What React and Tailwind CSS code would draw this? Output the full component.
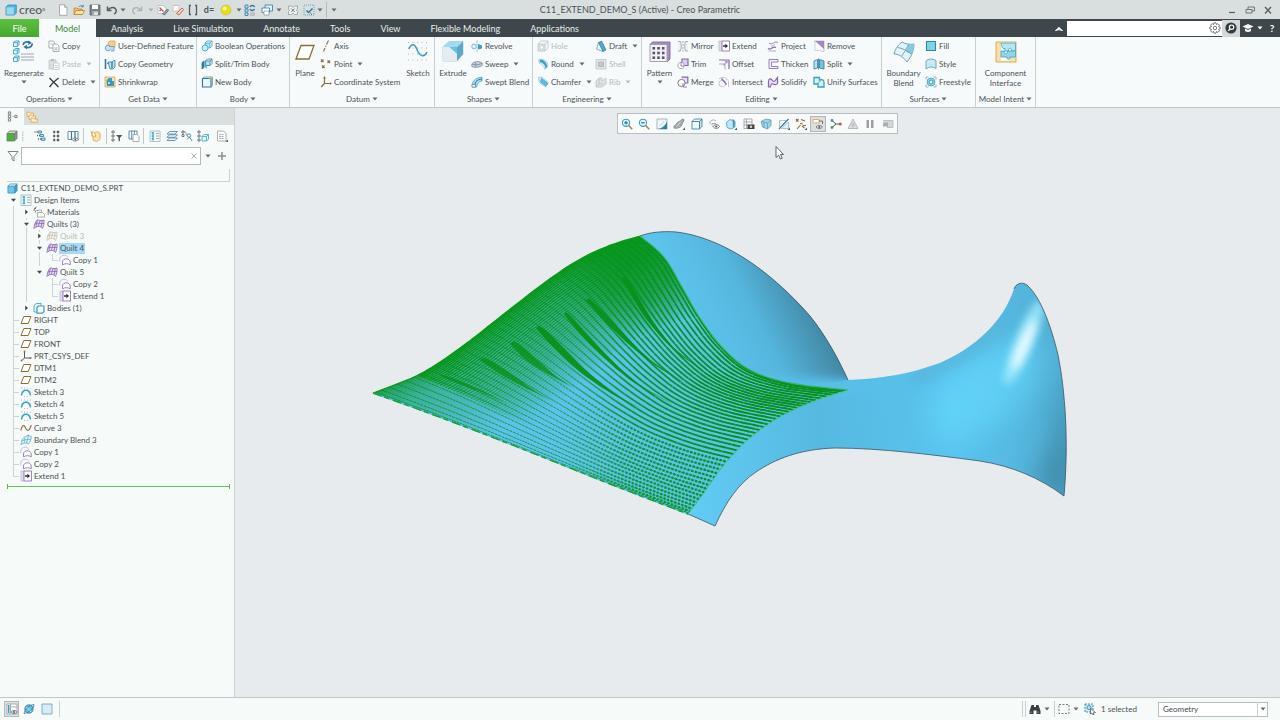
import React from "react";

/* ---------- palette ---------- */
const N = "#35779c";
const T = "#3a9fc4";
const L = "#b4e4f4";
const P = "#8466ad";
const G = "#969ca0";
const D = "#565c60";
const O = "#8a6f38";
const Y = "#dba548";

const cube = (x, y, s, c = T, f = L) => (
  <>
    <path d={`M${x} ${y + s * 0.3}h${s * 0.7}v${s * 0.7}h${-s * 0.7}z`} fill={f} stroke={c} />
    <path d={`M${x} ${y + s * 0.3}l${s * 0.3} ${-s * 0.3}h${s * 0.7}v${s * 0.7}l${-s * 0.3} ${s * 0.3}`} fill="none" stroke={c} />
    <path d={`M${x + s * 0.7} ${y + s * 0.3}l${s * 0.3} ${-s * 0.3}`} stroke={c} />
  </>
);

const solidBox = (front, top, side, line) => (
  <>
    <path d="M1 3.500h7.500V11H1z" fill={front} stroke={line} />
    <path d="M1 3.500L3.500 1H11L8.500 3.500z" fill={top} stroke={line} />
    <path d="M8.500 3.500L11 1V8.500L8.500 11z" fill={side} stroke={line} />
  </>
);

const quiltShape = (c, f) => (
  <>
    <path d="M1 10.500C1.200 7 2 4 4.500 1.800C7 3 9 2.500 11 2C11.500 5 10.500 8 9.500 10.500C8.500 9 7 8.500 5.500 8.500C3.500 8.600 2 9.200 1 10.500z" fill={f} stroke={c} />
    <path d="M2 6C4.500 4.500 8 5.800 11 5.500M7.300 2.500C6.300 4.500 5.600 6.500 5.500 8.500M4.400 2C3.500 4.800 3.200 7 3.200 8.800M9.300 2.500L8 9" stroke={c} fill="none" />
  </>
);
const copyShape = (
  <>
    <path d="M.8 7.500V4.500C1 2.500 3 1.200 5 1.200S8.500 2 8.700 3.500" fill="none" stroke="#b9b2c6" />
    <path d="M3.500 10.800V8C3.600 6 5.300 4.800 7.300 4.800S11 6 11.200 8V10.800C9 9.300 6 9.300 3.500 10.800z" fill="#fff" stroke={P} />
  </>
);
const extendShape = (
  <>
    <path d="M1 1h3v10H1z" fill="#e3dfee" stroke="#c0b8d0" />
    <path d="M4 1h7.500v10H4z" fill="#fff" stroke={P} />
    <path d="M5 6h2.500" stroke="#222" strokeWidth="1.400" />
    <path d="M7.300 3.800L10 6L7.300 8.200z" fill="#222" />
  </>
);

const ICONS = {
  logo: (<><path d="M1 3L3 1H11.300V9L9.300 11H1z" fill="#4cb4df" stroke="#2b93c4" /><path d="M1.500 3.300h7.300v7.200H1.500z" fill="#9cd9f0" /></>),
  file: (<><path d="M2.500.8h5l2.500 2.500v8H2.500z" fill="#fff" stroke={G} /><path d="M7.500.8v2.500H10" fill="none" stroke={G} /></>),
  open: (<><path d="M1 10.500V4h3l1 1h4v5.500z" fill="#f3c069" stroke="#b98427" /><path d="M1 10.500L3 6.500h8.500L9.500 10.500z" fill="#fbe0ab" stroke="#b98427" /><path d="M6 3C6.500 1.500 8.500 1 10 2.500M10.300.8v2H8.300" fill="none" stroke={N} /></>),
  save: (<><path d="M1 1h10v10H1z" fill="#7b8488" stroke="#5f676b" /><path d="M3 1h6v4H3z" fill="#fff" /><path d="M3 7.500h6V11H3z" fill="#d9dddf" /><path d="M4 8v3" stroke={D} /></>),
  undo: (<path d="M1.500 2.500v4h4M1.800 6.300C4 3 8.500 2.600 10 5.500C10.800 7.500 9.800 9.300 8 10" fill="none" stroke={D} strokeWidth="1.500" />),
  redo: (<path d="M10.500 2.500v4h-4M10.200 6.300C8 3 3.500 2.600 2 5.500C1.200 7.500 2.200 9.300 4 10" fill="none" stroke="#aab0b3" strokeWidth="1.300" />),
  docpen: (<><path d="M1 1.500h5l3 2.500V9.500H1z" fill="#fff" stroke="#b5b9bc" /><path d="M2.500 3.500l4 4M2.500 7l2-2" stroke="#c25b50" strokeWidth="1.300" /><path d="M5.500 10L10.500 5l1.200 1.200L7.500 11z" fill="#8aa3b5" stroke={D} strokeWidth=".7" /></>),
  docred: (<><path d="M1 1.500h6v5.500H1z" fill="#fff" stroke="#cfb4b0" /><path d="M4.500 9.500L10 4l1.500 1.500L7 11z" fill="#f2d7b0" stroke="#c25b50" strokeWidth=".9" /></>),
  bracket: (<path d="M4 1.500H2.500v9H4M8 1.500h1.500v9H8" fill="none" stroke={D} strokeWidth="1.300" />),
  ball: (<><circle cx="6" cy="6" r="5" fill="#e8de1f" stroke="#c9c23a" strokeWidth=".7" /><circle cx="4.700" cy="4.500" r="2" fill="#fbf68a" /></>),
  regen: (<><path d="M1 1h3v3H1zM1 5h3v3H1zM1 9h3v2.500H1z" fill={L} stroke={N} /><path d="M6 3C7 1 10 1 10.500 3M10.500 5C9.500 7 7 7 6 5" fill="none" stroke={N} strokeWidth="1.400" /><path d="M6 9h5M6 11h5" stroke={G} /></>),
  windows: (<><path d="M4 1h7.500v6H4z" fill="#dff1f8" stroke={N} /><path d="M1 4h7.500v4.500H1z" fill="#fff" stroke={N} /><path d="M3 7h5v4H3z" fill="#fff" stroke={G} /></>),
  closewin: (<><path d="M1.500 2h3l1.500 1.500L7.500 2h3v3L9.500 6.200l1 1.300v3h-3L6 9l-1.500 1.500h-3v-3l1-1.300-1-1.200z" fill="#eef0f1" stroke={G} /><path d="M4.200 4.500l3.500 3.500m0-3.500L4.200 8" stroke={D} /></>),
  select: (<><path d="M1 1h10v10H1z" fill="none" stroke={T} strokeDasharray="1 1" /><path d="M3.500 6.500l2 2L9.500 4.500" stroke={N} strokeWidth="1.500" fill="none" /><path d="M7 8.500l2 2.500" stroke={D} /></>),
  copy: (<><path d="M1 1h4l1.500 1.500V8H1z" fill="#fff" stroke={G} /><path d="M5 4h4l2 2v5.500H5z" fill="#fff" stroke={G} /><path d="M6.500 8h3M6.500 9.700h3M2.500 4h2" stroke={G} strokeWidth=".8" /></>),
  paste: (<><path d="M1 2h7v9H1z" fill="#dcdfe0" stroke="#c0c5c7" /><path d="M3 1h3v2H3z" fill="#b5babd" /><path d="M5.500 5H11v6.500H5.500z" fill="#fff" stroke="#c0c5c7" /><path d="M7 7.500h3M7 9.500h3" stroke="#c0c5c7" /></>),
  del: (<path d="M1.500 2L10.500 11M10.500 2C7 4.500 4 7.500 1.500 11" fill="none" stroke="#3d4347" strokeWidth="1.500" />),
  udf: (<><path d="M4 2.500L6 1h5v6L9 9H4z" fill="#f5cf8a" stroke={Y} /><circle cx="4" cy="8" r="2.800" fill="#cfe2f2" stroke="#6a93bd" /><path d="M5 6.500h5V11H7" fill="#b9dcf0" stroke="#6a93bd" /></>),
  copygeo: (<><path d="M1.500 1v10" stroke={N} strokeWidth="1.600" /><path d="M3 5.500h2.500" stroke={N} /><path d="M4 4h4l1.500-1.500H11V9l-2 2H6z" fill={L} stroke={N} /><path d="M8 4v6" stroke={N} strokeWidth="1.300" /></>),
  shrink: (<><path d="M1 1h10v10H1z" fill="#f6dfb0" stroke={Y} /><path d="M2.500 4L5 2h3v3h2v5H3z" fill={T} /><path d="M3.500 5.500h3v3h-3z" fill={L} stroke={N} /></>),
  bool: (<>{cube(4, 1, 7, T)}<circle cx="4" cy="8" r="3" fill="#cbeaf6" stroke={T} /></>),
  splitbody: (<><path d="M1 4.500L3 3v6.500L1 11z" fill={N} stroke={N} />{cube(4.500, 1, 6.500, N)}<path d="M3.500 2.500L6 8v3L3.500 9z" fill={T} opacity=".7" /></>),
  newbody: (<><path d="M1.500 2.500h8.500V11H1.500z" fill="#eef9fd" stroke={N} strokeWidth="1.200" /><path d="M1.500 2.500L3 1h8.500v8L10 11" fill="none" stroke={T} /><path d="M9.500.5l.6 1.700 1.700.5-1.700.7-.6 1.700-.6-1.700-1.700-.7 1.700-.5z" fill={Y} /></>),
  axis: (<path d="M8.500.5L6.500 4.500M6 5.800L5.600 6.700M5 8L3.500 11.500" stroke={O} strokeWidth="1.100" />),
  point: (<path d="M1 1.500l2.500 2.500m0-2.500L1 4M7.500 2.500L10 5m0-2.500L7.500 5M2 7.500L4.500 10m0-2.500L2 10" stroke={O} fill="none" strokeWidth="1.100" />),
  csys: (<><path d="M4.500 1v6.500H11M4.500 7.500L1.200 11" fill="none" stroke={O} strokeWidth="1.200" /><path d="M3.300 2.500L4.500.5L5.700 2.500M10 6.300l1.500 1.200L10 8.700" fill="none" stroke={O} strokeWidth=".6" /></>),
  revolve: (<><path d="M6 .5v11" stroke={G} strokeDasharray="2 1" /><ellipse cx="3" cy="6.500" rx="2.300" ry="2.500" fill="#e2f3fa" stroke="#6fa9c6" /><path d="M7 4L11 5.500v3L7 9.500z" fill={T} /></>),
  sweep: (<><path d="M.8 6C2 3.500 9 2.500 11.300 5v2.500C9 9.500 3 10 .8 8.500z" fill="#c6ced4" stroke="#8597a6" /><path d="M1 6C3.500 7.300 9 7 11 5M4 4.200C5 5.500 5 7 4.300 9" stroke="#6c8da6" fill="none" /></>),
  sweptblend: (<><path d="M1 9C2 4 6 1.500 11 1.200V5C8 5 6 8 5.500 11H1.500z" fill={L} stroke={T} /><path d="M3.500 10C4 6 7 3 11 3" stroke={N} fill="none" strokeWidth="1.200" /><path d="M1 8.500h3.500V11.200H1z" fill="#e9f6fb" stroke="#6c8da6" /></>),
  hole: (<>{cube(1, 1, 10, "#bcc1c3", "#e2e5e6")}<ellipse cx="4.700" cy="7.500" rx="1.600" ry="2.300" fill="#fff" stroke="#bcc1c3" /></>),
  round: (<><path d="M1.500 1.500L5 1C9 2 11 5 11 8.500L7.500 11.300C7.500 8.500 6 6.500 2.500 5.500z" fill="#d9eff7" stroke="#a9c6d2" /><path d="M3.300 1.500C7.500 2 10 5 10.200 9L8.500 10.500C8.300 7 6.300 4.800 2.500 4z" fill={T} /></>),
  chamfer: (<><path d="M1.500 1.500L5 1L11.300 6.500L8.500 11L2 6z" fill="#dcecf2" stroke="#a9c0ca" /><path d="M4.500 2.500L10.800 7.500L8.800 10L3.500 5.800z" fill="#5fc0e0" stroke={T} /></>),
  draft: (<><path d="M1.500 9L3.500 2.500 8 4v7.500z" fill="#e6f5fa" stroke="#6c9db3" /><path d="M3.500 2.500L6.500 1l4.500 9-3 1.500z" fill="#52aac9" stroke={N} strokeWidth=".7" /></>),
  shell: (<><path d="M1 1.500h10v9.500H1z" fill="#e4e7e8" stroke="#bcc1c3" /><path d="M3.500 4h5v4.500h-5z" fill="#c3c8ca" stroke="#aab0b3" /></>),
  rib: (<><path d="M1 5L4 2h3v3l4-3v6l-4 3H1z" fill="#dfe2e3" stroke="#bcc1c3" /><path d="M4 2v6l-3 3M4 8h4" stroke="#bcc1c3" fill="none" /></>),
  mirror: (<><path d="M1 1.500H3.500C4.500 4 4.500 8.500 3.500 11H1M11 1.500H8.500C7.500 4 7.500 8.500 8.500 11H11" fill="#f1eff6" stroke={G} /><path d="M6 1v10.500" stroke={P} strokeWidth=".6" strokeDasharray="2 1" /></>),
  extend: extendShape,
  project: (<><path d="M2 3C5 6 7 .5 11 2.500" stroke={P} fill="none" /><path d="M1 8.500C4 11 6 5.500 9 7.500" stroke={P} strokeWidth="1.200" fill="none" /><path d="M4 6.500l4-2M1.500 11H9" stroke={G} /></>),
  remove: (<><path d="M1 1h10v10.500H8.500" fill="none" stroke="#b9b2c6" /><path d="M2 1h9v8z" fill={P} opacity=".75" /><path d="M2 1v9.500h6.500" stroke="#cfc8da" fill="none" /></>),
  trim: (<><path d="M5 1h6v6.500H5z" fill="#d9cfe9" stroke={P} strokeWidth="1.200" /><circle cx="4" cy="7.500" r="3.200" fill="#fff" stroke={G} /><path d="M4 4.300V8h3.200" stroke={P} fill="none" /></>),
  offset: (<><path d="M1 2h10v9" fill="none" stroke={P} strokeWidth="1.200" /><path d="M1 6h6v5.500" fill="none" stroke={G} /><path d="M5.500 7.500L9 3.500M6.800 3.300H9v2" stroke={P} fill="none" /></>),
  thicken: (<path d="M11 1.500H2v9h9V8.500H4.500v-4.500H11z" fill="#f4f1f8" stroke={P} />),
  merge: (<><path d="M4.500 1.200h6.300V7H8" fill="#e9e4f1" stroke={P} strokeWidth="1.200" /><circle cx="4.500" cy="7" r="3.600" fill="#fff" stroke={D} /><path d="M6 7v4h4" fill="none" stroke={P} /></>),
  intersect: (<><path d="M1 3C4 0 9 1.500 10.500 5.500V11" fill="none" stroke="#b5babd" /><circle cx="4.300" cy="7.500" r="3.300" fill="#fff" stroke="#b5babd" /><path d="M3.500 2.500L8.500 8.500" stroke={P} strokeWidth="1.200" /></>),
  solidify: (<path d="M1.500 11V5C2 2.500 3.500 2.200 5 4C6.500 6 7.500 6 9 3.500L10.500 1.500V7.500C9 9.500 7 8.500 6 8C4.500 7.500 4 8 3.500 11z" fill="#e7e0f0" stroke={P} strokeWidth="1.200" />),
  split: (<><path d="M1 3l3.500-1.500V10L1 11z" fill={L} stroke={N} /><path d="M6.500 1.500L11 3v8l-4.500-1z" fill="#74c3de" stroke={N} /><path d="M5.500.5v11" stroke={N} /></>),
  unify: (<><path d="M1 1.500h5.500V4C9 3 11 4 11 6.500V11H5V8H1z" fill="#d7f1fa" stroke={T} strokeWidth="1.300" /><path d="M5 8C5 6 6 5 8 5" stroke={T} fill="none" /></>),
  fill: (<path d="M1.500 1.500h9v9h-9z" fill="#7fd3e4" stroke="#2f8ba3" strokeWidth="1.100" />),
  style: (<path d="M1 11V3C3 .5 8 .5 11 2.500V10.500C8 8.500 4 8.500 1 11z" fill="#c6ecf7" stroke="#6c8da6" />),
  freestyle: (<><path d="M1 3.500V1h2.500M8.500 1H11v2.500M11 8.500V11H8.500M3.500 11H1V8.500" fill="none" stroke={G} /><circle cx="6" cy="6" r="4" fill="#8fdcf2" stroke={T} /><circle cx="6" cy="6" r="2" fill="#dff5fb" stroke={N} /></>),
  treetab: (<><path d="M1.500 1h2.500v2.500H1.500zM1.500 4.700H4v2.500H1.500zM1.500 8.500H4V11H1.500z" fill="#fff" stroke={D} /><path d="M6 6h1M8.500 4.700H11v2.500H8.500z" fill="#fff" stroke={D} /></>),
  folders: (<><path d="M1 1.200h2.300l.8 1H7.500V5.500H1z" fill="#fdf0d5" stroke={Y} /><path d="M3 4h2.300l.8 1H9.500V8.300H3z" fill="#fdf0d5" stroke={Y} /><path d="M5 7h2.300l.8 1h3.200v3.200H5z" fill="#fdf0d5" stroke={Y} /></>),
  green: solidBox("#4fae3c", "#cfd6cf", "#8d968d", "#6a7a6a"),
  steps: (<><path d="M.5 2h3M3 5.500h3M4 9h3" stroke={D} strokeWidth="1.300" strokeDasharray="1 1" /><path d="M4 1h3.500v2H4zM6 4.500h3.500v2H6zM7.500 8h3.500v2.300H7.500z" fill={L} stroke={N} /></>),
  dotsTree: (<path d="M3.500 1h1.500v2H3.500zM3.500 5h1.500v2H3.500zM3.500 9h1.500v2H3.500zM7 1h2v2H7zM7 5h2v2H7zM7 9h2v2H7z" fill={D} stroke={D} strokeWidth=".5" />),
  cols: (<><path d="M1 1.500h10v8H1z" fill="#fff" stroke={N} /><path d="M4.500 1.500v8M8 1.500v8" stroke={N} strokeWidth="1.200" /><path d="M5 9.500C6.500 7.500 9.500 7.500 11.500 9.500C9.500 11.500 6.500 11.500 5 9.500z" fill="#fff" stroke={D} /><circle cx="8.300" cy="9.500" r=".9" fill={D} /></>),
  brace: (<><path d="M1.500 2h3M3 2v4h1.500" stroke={Y} fill="none" strokeWidth="1.200" /><path d="M5 3l3.500-1.500L11 3v6.500L7.500 11.500 4 10.300V6.500L6.500 7V4z" fill="#fbe2b0" stroke={Y} /></>),
  treefilter: (<><path d="M1 1h2v2H1zM1 5h2v2H1zM1 9h2v2H1z" fill="#fff" stroke={D} /><path d="M5 5h6.500L9 7.700v3.800L7.500 10.500V7.700z" fill={D} /></>),
  colscopy: (<><path d="M1 1h8v8H1z" fill="#fff" stroke={N} /><path d="M3.700 1v8M6.300 1v8" stroke={N} /><path d="M5 4.500h4l2 2v5H5z" fill="#fff" stroke={G} /></>),
  design: (<><path d="M1 1h10v10.500H1z" fill="#f4fafc" stroke="#9fb4c0" /><path d="M2.500 3h2.500M2.500 6h2.500M2.500 9h2.500M4 2v8.500" stroke={T} strokeWidth="1.200" /><path d="M7 3.500h3M7 6h3M7 8.500h3" stroke={G} /></>),
  layers: (<><path d="M1 10.500L3.500 8H11.500L9 10.500zM1 7.300L3.500 4.800H11.500L9 7.300zM1 4L3.500 1.500H11.500L9 4z" fill="#f4fafc" stroke="#3f7fa3" /></>),
  link: (<><path d="M1 1h2v2H1zM1 4.500h2v2H1z" fill="#fff" stroke={D} /><path d="M3 2h2v3h2" stroke={G} /><circle cx="8" cy="5.500" r="1.700" fill="#fff" stroke={N} /><path d="M8.500 7l2.500 4M6 9.500l2-2" stroke={N} /></>),
  treecube: (<><path d="M1 1h2v2H1zM1 5h2v2H1zM1 9h2v2H1z" fill="#fff" stroke={D} />{cube(5, 4.500, 6.500, T, "#e4f5fb")}</>),
  notes: (<><path d="M1.500 1h6l2.500 2.500v7.500H1.500z" fill="#fff" stroke={G} /><path d="M3 4.500h5M3 6.500h5M3 8.500h5" stroke={G} strokeDasharray="2 .5" /><path d="M9.500 12h2.500V9.500z" fill={D} /></>),
  funnel: (<path d="M1 1.500h10L7 6.500V11L5 9.500V6.500z" fill="#fff" stroke="#5d6468" />),
  part: solidBox("#6cc6ea", "#c5eaf7", "#3f9fc6", "#3a93ba"),
  material: (<><path d="M1 5C1 2.500 2.500 1 4.500 1M2.500 6.500V4.500h3M1 2.500h2" stroke={D} fill="none" strokeDasharray="2 1" /><path d="M4.500 6.500h5L11.500 8.500v2.500h-7z" fill="#fff" stroke={G} /><path d="M5.500 4h3v2.500" stroke={G} fill="none" /></>),
  quilt: quiltShape(P, "#e6daf2"),
  quiltoff: quiltShape("#c5c0b4", "#f6f4ee"),
  copies: copyShape,
  bodies: (<><path d="M1 4l2-2.500h5V8L6 10H1z" fill="#dff3fa" stroke={T} /><path d="M4 5.500L5.500 4H11V9.500L9.500 11.200H4z" fill="#fff" stroke={T} strokeWidth="1.200" /></>),
  planes: (<path d="M1 9.500L3.800 2.500H11L8.200 9.500z" fill="#fff" stroke={O} strokeWidth="1" />),
  csysd: (<><path d="M4.500 1.500v6.500H11M4.500 8L1.200 11" fill="none" stroke={D} strokeWidth="1" /><path d="M4.500 .5v2M9.500 8h2M1 11l1-1" stroke={O} strokeWidth="1.500" /></>),
  sketch: (<><path d="M1.500 9.500C2.500 2.500 9.500 2.500 10.500 9.500" fill="none" stroke={T} strokeWidth="1.500" /><path d="M1 2h10M1 6h1M10 6h1M4 10.500h4" stroke="#8cb9cc" strokeDasharray="1 2" /></>),
  curve: (<path d="M.8 8.500C2 3.500 3.800 2 5.300 5.500C7 9.800 9.500 9.500 11.200 3" fill="none" stroke={O} strokeWidth="1.100" />),
  bblend: (<><path d="M1 11C1.500 7.500 2 5 4 3.500L8.500 1C9.500 2 10.500 2.500 11.300 2.500C11 6 10 8 8.500 10C7 8.500 3 8.500 1 11z" fill="#e4f6fb" stroke="#56acca" /><path d="M4 3.500C5 4.500 5 7 4 8.800M8.500 1C8 4 7.500 6 6.500 9M2 7C5 5 8 6 10.800 5" stroke="#56acca" fill="none" /></>),
  zoomin: (<><circle cx="5" cy="4.800" r="3.600" fill="#e9f8fd" stroke={T} strokeWidth="1.100" /><path d="M5 3v3.600M3.200 4.800h3.600" stroke={N} strokeWidth="1.300" /><path d="M7.700 7.500l3.500 3.800" stroke="#a08457" strokeWidth="1.500" /></>),
  zoomout: (<><circle cx="5" cy="4.800" r="3.600" fill="#e9f8fd" stroke={T} strokeWidth="1.100" /><path d="M3.200 4.800h3.600" stroke={N} strokeWidth="1.300" /><path d="M7.700 7.500l3.500 3.800" stroke="#a08457" strokeWidth="1.500" /></>),
  refit: (<><path d="M1 1h10v10H1z" fill="#f1f8fb" stroke="#92a7b2" /><path d="M11 3.500V11H2.500C6 10 9.500 7.500 11 3.500z" fill="#2f7f9f" /><path d="M3.500 7.500L8 3.500" stroke="#9cc8d8" /></>),
  render: (<><path d="M1 8C3 8 3.500 4 6 3.500S8 1 10.500 1L11 3C9 4 9.500 8.500 6.500 9.500S2 10.500 1 10z" fill="#a4aaae" stroke="#7f878b" /><path d="M3.500 9C5.500 8 5 5 7.500 4.500" stroke="#e4e7e8" /><path d="M9.500 12h2.500V9.500z" fill={D} /></>),
  boxwire: solidBox("#f0fafd", "#f0fafd", "#bfe4f1", N),
  saved: (<><path d="M2 6V4C3 1.500 7 1.500 8 3M4 7.500V5.500h4" fill="none" stroke={G} /><path d="M5 8.500C6.500 6 10 6 11.500 8.500C10 11 6.500 11 5 8.500z" fill="#fff" stroke={D} /><circle cx="8.200" cy="8.500" r="1.100" fill={D} /></>),
  section: (<><path d="M1.500 4.500L5 1.500L10 3.500V9L6 11L2 9.500z" fill="#bfe9f6" stroke={T} /><path d="M7.500 1C10.500 2 10.500 8 8 10z" fill="#4a93b3" /><path d="M9.500 12h2.500V9.500z" fill={D} /></>),
  camlist: (<><path d="M1 1h8v9.500H1z" fill="#fff" stroke={G} /><path d="M1 4h8M1 7h4M3.500 1v9" stroke={G} /><path d="M4.500 6.500h7V11h-7z" fill="#3f464a" /><circle cx="8" cy="8.700" r="1.300" fill="#cfd4d6" /></>),
  persp: (<><path d="M1 3.500L6 1L11 2v5.500L7.500 11L2.500 9z" fill="#a3d3e6" stroke="#5fa0ba" /><path d="M1 3.500l6.500 1.500V11M7.500 5L11 2M4 4.300V9.500" stroke="#5fa0ba" fill="none" /></>),
  datumdisp: (<><path d="M1.500 9V2.500h7" stroke="#9eb8c4" fill="none" /><path d="M3.500 10.500h7V4z" fill="#dff3fa" stroke="#9eb8c4" /><path d="M1 11L10.500 1" stroke={N} strokeWidth="1.100" /><path d="M9.500 12h2.500V9.500z" fill={D} /></>),
  datums: (<><path d="M1 1l2.500 2.500M3.500 1L1 3.500M6 1.500l4 1.500M2 11L5.500 7M5 5.500l3 .5M7 8l2.500 2M8 7.500h3" stroke={O} strokeWidth="1.100" /><path d="M9.500 12h2.500V9.500z" fill={D} /></>),
  annot: (<><path d="M1 1.500h6v3.500H1z" fill="#fff" stroke={Y} /><path d="M7 3h3.500v3" stroke={D} fill="none" /><path d="M4 9C5.500 7 9 7 10.500 9C9 11 5.500 11 4 9z" fill="#fff" stroke={D} /><circle cx="7.300" cy="9" r="1.100" fill={D} /></>),
  spin: (<><path d="M6 6L2 2.500M6 6L2 9.500M6 6h4" stroke={D} strokeWidth="1" /><circle cx="2" cy="2.500" r="1.400" fill="#4a8fb0" /><circle cx="2" cy="9.500" r="1.400" fill="#4a9b6c" /><circle cx="10.300" cy="6" r="1.500" fill="#c5574f" /></>),
  sim: (<path d="M6 1L11 10.500H1zM6 4v6M3.500 8L6 6l2.500 2.500" fill="#dfe2e3" stroke="#a7adb0" />),
  pause: (<path d="M2.500 2h2.500v8H2.500zM7 2h2.500v8H7z" fill="#9aa0a3" />),
  stop: (<><path d="M1 2.500h10v7H5" fill="#d3d7d8" stroke="#b0b6b8" /><path d="M1 4.500h5v4H1z" fill="#a9afb2" /></>),
  modeltree: (<><path d="M1 1h10v10H1z" fill="#fff" stroke={G} /><path d="M2 2h1.500v8H2z" fill={T} /><path d="M4.500 4H11M4.500 1v10" stroke={G} /><path d="M5 9C6.500 7 9.500 7 11.200 9C9.500 11 6.500 11 5 9z" fill="#fff" stroke={D} /><circle cx="8" cy="9" r="1" fill={D} /></>),
  web: (<><circle cx="6" cy="6" r="4.200" fill="#66bfe2" stroke={N} /><path d="M1 10.500C2 6 6 2 11 1.500C11 5 6 10 1 10.500z" fill="none" stroke={N} /><path d="M3 4.500C5 5 7 7 8 9" stroke="#d6f0fa" /></>),
  blank: (<path d="M1 1h10v10H1z" fill="#d7ecf6" stroke="#6f9db5" />),
  binoc: (<><path d="M2.500 2h2.500v2h2V2h2.500L11.500 8v3H7.500V7.500h-3V11H.5V8z" fill="#3b4044" /><path d="M2 8.500v1.500M9 8.500v1.500" stroke="#a4b0b6" /></>),
  dashed: (<path d="M1 1.500h10v9H1z" fill="none" stroke={D} strokeDasharray="2 1.500" />),
  picker: (<><path d="M1 1h8v8H1z" fill="#cdeaf5" stroke={N} strokeDasharray="2 1" /><circle cx="5" cy="4.500" r="2" fill={L} stroke={N} /><path d="M6.500 5.500L11.500 9.500L9.300 9.800L10 11.700L8.600 11.500L8 10L6.500 11z" fill="#fff" stroke={D} /></>),
  gear: (<><path d="M5 .8h2l.4 1.800 1.500-.9 1.500 1.500-.9 1.500L11.200 5v2l-1.700.4.9 1.500-1.500 1.500-1.500-.9L7 11.200H5l-.4-1.700-1.500.9-1.500-1.500.9-1.500L.8 7V5l1.700-.4-.9-1.500 1.500-1.500 1.500.9z" fill="#fff" stroke={D} /><circle cx="6" cy="6" r="1.700" fill="#fff" stroke={D} /></>),
  search: (<><circle cx="6" cy="6" r="5.600" fill="#353c40" /><circle cx="6.600" cy="5.200" r="2.200" fill="none" stroke="#fff" strokeWidth="1.200" /><path d="M5 7L3.300 8.800" stroke="#fff" strokeWidth="1.400" /></>),
  cap: (<><path d="M.5 4.500L6 2l5.500 2.500L6 7z" fill="#fff" /><path d="M3 6.500V9c2 1.200 4 1.200 6 0V6.500L6 8z" fill="#fff" /></>),
  min: (<path d="M3 8.500h6" stroke={D} strokeWidth="1.200" />),
  restore: (<><path d="M4 3h6.500v4H4z" fill="none" stroke={D} /><path d="M2 5.500h6v3.500H2z" fill="#d9dedf" stroke={D} /></>),
  close: (<path d="M3 3l6 6.500M9 3L3 9.500" stroke={D} strokeWidth="1.300" />),
};

const BIG = {
  regen: (
    <>
      {[0, 1, 2].map((i) => <g key={i}>{cube(1.5, 1 + i * 7.5, 5.500, T, "#e4f6fc")}</g>)}
      <path d="M11 5C11.500 2 15 1 17.500 2.500M20 3.500C20.500 6.500 17 8.500 14 7" fill="none" stroke={N} strokeWidth="1.800" />
      <path d="M16.500.2L19.800 3L16 5zM14.800 4.800L11.500 7L15 9.500z" fill={N} />
      <path d="M9 14h13M9 17h13M9 20h13" stroke={G} />
    </>
  ),
  plane: <path d="M3 19L8 5.500H21L16 19z" fill="#fff" stroke={O} strokeWidth="1.300" />,
  sketch: (
    <>
      <path d="M2 2.500h20M2 8h20M2 14h20M2 20h20" stroke="#a5b1b7" strokeDasharray="1 3.500" />
      <path d="M3 9C5 3.500 8.500 3 11 9.500S18 18.500 21 12" fill="none" stroke={T} strokeWidth="1.500" />
    </>
  ),
  extrude: (
    <>
      <path d="M2 7L8 1.500H22V14L16 21H2z" fill="#e9f2f5" stroke="#b9c8cf" />
      <path d="M2 7L8 1.500H22L16 7z" fill="#9fdcf1" />
      <path d="M16 7L22 1.500V14L16 21z" fill="#5ba9c7" />
      <path d="M8 7H16V14L8 7z" fill="#6fbfdd" />
      <path d="M2 7h6L16 14v7H2z" fill="#e3edf0" />
    </>
  ),
  pattern: (
    <>
      <path d="M2 4.500L4.500 2H22V19L19.500 21.500z" fill="#a58bc8" stroke={P} />
      <path d="M2 4.500H19V21.500H2z" fill="#f3f3f6" stroke={G} />
      {[0, 1, 2].map((r) => [0, 1, 2].map((c) => <rect key={`${r}${c}`} x={4.5 + c * 4.7} y={7 + r * 4.7} width="2.600" height="2.600" fill="#5a556c" />))}
    </>
  ),
  blend: (
    <>
      <path d="M2 14C3 9 6 5 10 2C14 4.500 18 4.500 22 4C22 11 19 17 15 22C13 19 7 13.500 2 14z" fill="#e0f4fa" stroke="#6a9aae" />
      <path d="M14 12C15 9 16 6.500 16.500 4.300C18.500 4.500 20 4.300 22 4C22 8 21 11 19.500 14z" fill="#86cbe2" />
      <path d="M16.500 4.300C14.500 9 12 13 9.500 16M5.500 7.500C10 8 15 10.500 19.500 14" fill="none" stroke="#6a9aae" />
    </>
  ),
  comp: (
    <>
      <path d="M2 2H22V22H2z" fill="#f9dfae" stroke={Y} />
      <path d="M7 2.500H21.500V17H15.500V20.500H7z" fill="#fff" />
      <path d="M7 3H21.500V11H17.500C18.500 7.500 13.500 7.500 14.500 11H11V8.500C7.500 9.500 7.500 4.500 7 3z" fill="#b8e5ef" stroke="#4aa9c5" />
      <path d="M7 11H10.500C9.500 14.500 14 14.500 13.500 11H21.500V17H16C17 20 12 20 13 17H7z" fill="#8fd6e8" stroke="#4aa9c5" />
    </>
  ),
};

function Icon({ name, className = "size-3" }) {
  return (
    <svg viewBox="0 0 12 12" className={`shrink-0 ${className}`} fill="none" strokeWidth=".8" aria-hidden="true">
      {ICONS[name]}
    </svg>
  );
}

function Caret({ className = "text-[#62686c]" }) {
  return (
    <svg viewBox="0 0 6 4" className={`h-1 w-1.5 shrink-0 ${className}`} aria-hidden="true">
      <path d="M.5.500h5L3 3.500z" fill="currentColor" />
    </svg>
  );
}

function IconButton({ name, label, className = "w-4" }) {
  return (
    <button type="button" aria-label={label || name} className={`flex h-4 shrink-0 items-center justify-center ${className}`}>
      <Icon name={name} />
    </button>
  );
}

function CaretButton({ label, className = "w-2", color }) {
  return (
    <button type="button" aria-label={label} className={`flex h-4 shrink-0 items-center justify-center ${className}`}>
      <Caret className={color} />
    </button>
  );
}

/* ---------- title bar ---------- */
function TitleBar() {
  return (
    <header className="grid h-[19px] shrink-0 grid-cols-[1fr_auto_1fr] items-center bg-[#d9dedf]">
      <div className="flex items-center">
        <div className="flex w-[55px] items-center gap-[2px] pl-[5px]">
          <Icon name="logo" />
          <span className="text-[12px] font-medium text-[#565d61]">creo<span className="text-[8px]">°</span></span>
        </div>
        <IconButton name="file" label="New" />
        <IconButton name="open" label="Open" />
        <IconButton name="save" label="Save" />
        <IconButton name="undo" label="Undo" className="w-[18px]" />
        <CaretButton label="Undo list" className="w-1" />
        <IconButton name="redo" label="Redo" className="w-6" />
        <CaretButton label="Redo list" className="w-1" color="text-[#aab0b3]" />
        <IconButton name="docpen" label="Edit definition" className="w-5" />
        <IconButton name="docred" label="Redline" className="w-[10px]" />
        <IconButton name="bracket" label="Parameters" className="w-5" />
        <button type="button" className="h-4 w-3 whitespace-nowrap text-center text-[9px] font-bold leading-4">d=</button>
        <IconButton name="ball" label="Appearance" className="w-[22px]" />
        <CaretButton label="Appearance list" className="w-1" />
        <IconButton name="regen" label="Regenerate" className="w-[18px]" />
        <IconButton name="windows" label="Windows" />
        <CaretButton label="Windows list" />
        <IconButton name="closewin" label="Close window" className="w-5" />
        <IconButton name="select" label="Select" className="w-3" />
        <CaretButton label="Select list" className="w-[10px]" />
        <div className="mx-px h-4 w-px bg-[#b3b9bb]" />
        <CaretButton label="Customize" className="w-3" />
      </div>
      <h1 className="whitespace-nowrap text-[9px] text-[#4b5256]">C11_EXTEND_DEMO_S (Active) - Creo Parametric</h1>
      <div className="flex justify-end gap-[2px] pr-1">
        <IconButton name="min" label="Minimize" />
        <IconButton name="restore" label="Restore" />
        <IconButton name="close" label="Close" />
      </div>
    </header>
  );
}

const TABS = ["Analysis", "Live Simulation", "Annotate", "Tools", "View", "Flexible Modeling", "Applications"];

function TabBar() {
  return (
    <nav className="flex h-[18px] shrink-0 items-center bg-[#3e474b] text-[9px] text-[#e9eded]">
      <button type="button" className="h-full w-[39px] bg-linear-to-b from-[#5cc043] to-[#46a82f] text-white">File</button>
      <button type="button" className="h-full w-[57px] bg-[#f7fafa] text-[#3f8a35]">Model</button>
      <div className="flex flex-1 gap-[2px] pl-px">
        {TABS.map((t) => (
          <button key={t} type="button" className="px-[14px]">{t}</button>
        ))}
      </div>
      <button type="button" aria-label="Collapse ribbon" className="flex h-full w-[17px] items-center justify-center">
        <svg viewBox="0 0 8 5" className="h-[5px] w-2" aria-hidden="true"><path d="M0 5L4 1L8 5L4 3.800z" fill="#fff" stroke="#fff" strokeWidth=".5" /></svg>
      </button>
      <div className="flex h-[15px] w-[155px] items-center bg-white pr-px">
        <input type="text" aria-label="Search commands" className="h-full min-w-0 flex-1 px-1 text-[8px] text-[#33393c] outline-none" />
        <Icon name="gear" />
      </div>
      <button type="button" aria-label="Search" className="flex h-[17px] w-[18px] items-center justify-center bg-[#d3d8d9]">
        <Icon name="search" />
      </button>
      <IconButton name="cap" label="Learning" />
      <CaretButton label="Learning list" color="text-white" />
      <button type="button" className="w-4 text-[10px] font-bold text-white">?</button>
    </nav>
  );
}

/* ---------- ribbon ---------- */
function Item({ icon, children, caret, off }) {
  return (
    <button type="button" disabled={off} className={`flex h-[18px] items-center gap-[2px] whitespace-nowrap ${off ? "text-[#b4babc]" : ""}`}>
      <Icon name={icon} />
      <span>{children}</span>
      {caret && <span className="pl-[3px]"><Caret className={off ? "text-[#b4babc]" : "text-[#62686c]"} /></span>}
    </button>
  );
}

function Big({ icon, lines, caret, w }) {
  return (
    <button type="button" className={`flex h-[54px] shrink-0 flex-col items-center pt-[3px] ${w}`}>
      <svg viewBox="0 0 24 24" className="size-6 shrink-0" fill="none" strokeWidth=".9" aria-hidden="true">{BIG[icon]}</svg>
      {lines.map((l) => <span key={l} className="whitespace-nowrap pt-[2px] leading-[8px] first-of-type:pt-[5px]">{l}</span>)}
      {caret && <span className="flex pt-[3px]"><Caret /></span>}
    </button>
  );
}

function Col({ w = "", items }) {
  return (
    <div className={`flex flex-col items-start ${w}`}>
      {items.map(([icon, text, caret, off]) => <Item key={text} icon={icon} caret={caret} off={off}>{text}</Item>)}
    </div>
  );
}

function Group({ title, w, children, plain }) {
  return (
    <section className={`flex shrink-0 flex-col border-r border-[#c9cfd0] ${w}`}>
      <div className={`flex h-[54px] ${plain ? "pl-1" : ""}`}>{children}</div>
      <button type="button" className="flex h-4 items-center justify-center gap-[2px] whitespace-nowrap">
        {title}
        <Caret />
      </button>
    </section>
  );
}

function Ribbon() {
  return (
    <div className="flex h-[71px] shrink-0 border-b border-[#c2c8c9] bg-[#f7fafa]">
      <Group title="Operations" w="w-[100px]">
        <Big icon="regen" lines={["Regenerate"]} caret w="w-12" />
        <Col items={[["copy", "Copy"], ["paste", "Paste", true, true], ["del", "Delete", true]]} />
      </Group>
      <Group title="Get Data" w="w-[97px]" plain>
        <Col items={[["udf", "User-Defined Feature"], ["copygeo", "Copy Geometry"], ["shrink", "Shrinkwrap"]]} />
      </Group>
      <Group title="Body" w="w-[93px]" plain>
        <Col items={[["bool", "Boolean Operations"], ["splitbody", "Split/Trim Body"], ["newbody", "New Body"]]} />
      </Group>
      <Group title="Datum" w="w-[145px]">
        <Big icon="plane" lines={["Plane"]} w="w-[30px]" />
        <Col w="w-[82px]" items={[["axis", "Axis"], ["point", "Point", true], ["csys", "Coordinate System"]]} />
        <Big icon="sketch" lines={["Sketch"]} w="w-8" />
      </Group>
      <Group title="Shapes" w="w-[98px]">
        <Big icon="extrude" lines={["Extrude"]} w="w-9" />
        <Col items={[["revolve", "Revolve"], ["sweep", "Sweep", true], ["sweptblend", "Swept Blend"]]} />
      </Group>
      <Group title="Engineering" w="w-[109px]" plain>
        <Col w="w-[58px]" items={[["hole", "Hole", false, true], ["round", "Round", true], ["chamfer", "Chamfer", true]]} />
        <Col items={[["draft", "Draft", true], ["shell", "Shell", false, true], ["rib", "Rib", true, true]]} />
      </Group>
      <Group title="Editing" w="w-[240px]">
        <Big icon="pattern" lines={["Pattern"]} caret w="w-[35px]" />
        <Col w="w-[41px]" items={[["mirror", "Mirror"], ["trim", "Trim"], ["merge", "Merge"]]} />
        <Col w="w-[49px]" items={[["extend", "Extend"], ["offset", "Offset"], ["intersect", "Intersect"]]} />
        <Col w="w-[46px]" items={[["project", "Project"], ["thicken", "Thicken"], ["solidify", "Solidify"]]} />
        <Col items={[["remove", "Remove"], ["split", "Split", true], ["unify", "Unify Surfaces"]]} />
      </Group>
      <Group title="Surfaces" w="w-[94px]">
        <Big icon="blend" lines={["Boundary", "Blend"]} w="w-[43px]" />
        <Col items={[["fill", "Fill"], ["style", "Style"], ["freestyle", "Freestyle"]]} />
      </Group>
      <Group title="Model Intent" w="w-[60px]">
        <Big icon="comp" lines={["Component", "Interface"]} w="w-[59px]" />
      </Group>
    </div>
  );
}

/* ---------- model tree ---------- */
/* guide cells: d = open arrow, r = closed arrow, | = line, t = branch, e = last branch, . = empty,
   D and R = arrows with the line running on above and below */
const TREE = [
  ["d", "design", "Design Items"],
  ["|r", "material", "Materials"],
  ["|D", "quilt", "Quilts (3)"],
  ["||R", "quiltoff", "Quilt 3", "off"],
  ["||D", "quilt", "Quilt 4", "on"],
  ["|||e", "copies", "Copy 1"],
  ["||d", "quilt", "Quilt 5"],
  ["||.t", "copies", "Copy 2"],
  ["||.e", "extend", "Extend 1"],
  ["|r", "bodies", "Bodies (1)"],
  ["t", "planes", "RIGHT"],
  ["t", "planes", "TOP"],
  ["t", "planes", "FRONT"],
  ["t", "csysd", "PRT_CSYS_DEF"],
  ["t", "planes", "DTM1"],
  ["t", "planes", "DTM2"],
  ["t", "sketch", "Sketch 3"],
  ["t", "sketch", "Sketch 4"],
  ["t", "sketch", "Sketch 5"],
  ["t", "curve", "Curve 3"],
  ["t", "bblend", "Boundary Blend 3"],
  ["t", "copies", "Copy 1"],
  ["t", "copies", "Copy 2"],
  ["e", "extend", "Extend 1"],
];

function Guide({ kind }) {
  const line = { "|": "M6.500 0V12", t: "M6.500 0V12M6.500 6.500H12", e: "M6.500 0V6.500H12", D: "M6.500 0V2M6.500 10V12", R: "M6.500 0V2M6.500 10V12" }[kind];
  const k = kind.toLowerCase();
  return (
    <svg viewBox="0 0 13 12" className="h-3 w-[13px] shrink-0" fill="none" aria-hidden="true">
      {line && <path d={line} stroke="#cdd2d4" />}
      {k === "d" && <path d="M4 4.800h5L6.500 7.800z" fill="#3f464a" />}
      {k === "r" && <path d="M5.200 3.500v5L8 6z" fill="#3f464a" />}
    </svg>
  );
}

function SideBar() {
  const sep = <div className="h-4 w-px shrink-0 bg-[#c4cacb]" />;
  return (
    <aside className="flex w-[235px] shrink-0 flex-col border-r border-[#ccd2d6] bg-[#f6faf9]">
      <div className="flex h-[17px] bg-[#d9dedf]">
        <button type="button" aria-label="Model Tree" className="flex w-6 items-center justify-center bg-[#f6faf9]"><Icon name="treetab" className="size-[11px]" /></button>
        <button type="button" aria-label="Folder Browser" className="flex w-4 items-center justify-center"><Icon name="folders" /></button>
      </div>
      <div className="flex h-[22px] items-center pl-1">
        <IconButton name="green" label="Model" />
        <svg viewBox="0 0 4 12" className="ml-px h-3 w-1" aria-hidden="true"><path d="M2 1v11" stroke="#a9afb2" strokeDasharray="2 1" /></svg>
        <span className="w-2" />
        <IconButton name="steps" label="Expand levels" />
        <IconButton name="dotsTree" label="Tree settings" />
        <IconButton name="cols" label="Columns" className="w-[18px]" />
        <span className="w-[2px]" />
        {sep}
        <IconButton name="brace" label="Regenerate from" className="w-[22px]" />
        {sep}
        <IconButton name="treefilter" label="Tree filters" className="w-5" />
        <IconButton name="colscopy" label="Tree columns" className="w-[14px]" />
        <span className="w-[2px]" />
        {sep}
        <IconButton name="design" label="Design items" className="w-[22px]" />
        <IconButton name="layers" label="Layers" className="w-3" />
        <IconButton name="link" label="References" className="w-[18px]" />
        <IconButton name="treecube" label="Components" className="w-[14px]" />
        <IconButton name="notes" label="Notes" className="w-6" />
      </div>
      <div className="flex h-[18px] items-center">
        <div className="flex w-[21px] justify-center pl-1"><Icon name="funnel" /></div>
        <div className="flex h-full flex-1 items-center border border-[#b4babc] bg-white">
          <input type="text" aria-label="Filter tree" className="h-full min-w-0 flex-1 px-1 text-[8px] outline-none" />
          <button type="button" aria-label="Clear filter" className="flex w-3 items-center justify-center">
            <svg viewBox="0 0 6 6" className="size-[6px]" aria-hidden="true"><path d="M.5.500l5 5m0-5l-5 5" stroke="#8b9296" strokeWidth=".8" /></svg>
          </button>
        </div>
        <CaretButton label="Filter options" className="w-[13px]" />
        <button type="button" aria-label="Add filter" className="flex w-5 items-center justify-center pr-1">
          <svg viewBox="0 0 8 8" className="size-2" aria-hidden="true"><path d="M4 0v8M0 4h8" stroke="#8b9195" strokeWidth="1.600" /></svg>
        </button>
      </div>
      <div className="ml-[7px] mr-1 mt-1 h-[13px] border-b border-r border-[#ccd2d3]" />
      <ul className="flex flex-col pl-[7px] text-[#4c5256]">
        <li className="flex h-3 items-center gap-[3px]"><Icon name="part" className="size-[11px]" />C11_EXTEND_DEMO_S.PRT</li>
        {TREE.map(([guides, icon, text, state], i) => (
          <li key={i} className="flex h-3 items-center">
            {guides.split("").map((g, j) => <Guide key={j} kind={g} />)}
            <Icon name={icon} />
            <span className={`ml-px px-px leading-[11px] ${state === "on" ? "bg-[#a5d9f5]" : ""} ${state === "off" ? "text-[#b8bcb8]" : ""}`}>{text}</span>
          </li>
        ))}
      </ul>
      <div className="ml-[7px] mr-1 mt-[2px] flex h-[5px] items-center border-x border-[#5fb84c]"><div className="h-px flex-1 bg-[#6cc35a]" /></div>
    </aside>
  );
}

/* ---------- surface drawing ---------- */
const spline = (pts, n) => {
  const out = [];
  const at = (i) => pts[Math.max(0, Math.min(pts.length - 1, i))];
  for (let k = 0; k <= n; k++) {
    const t = (k / n) * (pts.length - 1);
    const i = Math.min(pts.length - 2, Math.floor(t));
    const f = t - i;
    const [a, b, c, d] = [at(i - 1), at(i), at(i + 1), at(i + 2)];
    out.push([0, 1].map((m) => 0.5 * (2 * b[m] + (c[m] - a[m]) * f + (2 * a[m] - 5 * b[m] + 4 * c[m] - d[m]) * f * f + (3 * b[m] - a[m] - 3 * c[m] + d[m]) * f * f * f)));
  }
  return out;
};
const STEPS = 60;
const EDGE_L = spline([[373, 393], [420, 374], [460, 348], [500, 317], [540, 286], [575, 262], [608, 246], [640, 236]], STEPS);
const EDGE_R = spline([[688, 514], [704, 493], [724, 465], [750, 438], [780, 417], [812, 402], [848, 390]], STEPS);
const EDGE_B = spline([[373, 393], [450, 421], [530, 452], [610, 484], [688, 514]], STEPS);
const EDGE_T = spline([[640, 236], [664, 257], [682, 287], [700, 318], [722, 347], [750, 370], [790, 383], [848, 390]], STEPS);
const patch = (iu, iv) => {
  const u = iu / STEPS;
  const v = iv / STEPS;
  return [0, 1].map((m) =>
    (1 - v) * EDGE_B[iu][m] + v * EDGE_T[iu][m] + (1 - u) * EDGE_L[iv][m] + u * EDGE_R[iv][m] -
    ((1 - u) * (1 - v) * EDGE_B[0][m] + u * (1 - v) * EDGE_B[STEPS][m] + (1 - u) * v * EDGE_T[0][m] + u * v * EDGE_T[STEPS][m]));
};
const toPath = (pts) => "M" + pts.map((p) => `${p[0].toFixed(1)} ${p[1].toFixed(1)}`).join("L");
const range = (n) => Array.from({ length: n }, (_, i) => i);
const between = (t, pointsAt) => {
  const i = Math.min(STEPS - 1, Math.floor(t * STEPS));
  const f = t * STEPS - i;
  const a = pointsAt(i);
  const b = pointsAt(i + 1);
  return a.map((p, k) => [p[0] + (b[k][0] - p[0]) * f, p[1] + (b[k][1] - p[1]) * f]);
};
const ALL = range(STEPS + 1);
const mixRow = (v) => between(v, (i) => ALL.map((u) => patch(u, i)));
const mixCol = (u) => between(u, (i) => ALL.map((v) => patch(i, v)));
const ROW_COUNT = 44;
const ROWS = range(ROW_COUNT).map((i) => toPath(mixRow((i + 0.5) / ROW_COUNT)));
const COL_COUNT = 46;
const COLS = range(COL_COUNT).map((i) => toPath(mixCol((i + 0.3) / 110).slice(8)));
const TIP_COLS = range(12).map((i) => toPath(mixCol((i + 0.3) / 110).slice(0, 9)));
const GREEN_AREA = toPath([...EDGE_L, ...EDGE_T, ...[...EDGE_R].reverse(), ...[...EDGE_B].reverse()]) + "Z";
const streak = (pts, w) => {
  const c = spline(pts, 20);
  const up = c.map((p, i) => {
    const k = w * Math.sin((Math.PI * (i + 3)) / 23) * (1 - i / 22);
    return [p[0] + k, p[1] - k * 0.8];
  });
  return toPath([...c, ...up.reverse()]) + "Z";
};
const STREAKS = [
  [[[622, 278], [634, 300], [650, 324], [674, 350], [712, 377]], 6],
  [[[586, 300], [602, 318], [626, 342], [656, 366], [698, 390]], 6],
  [[[564, 314], [580, 334], [604, 358], [636, 384], [680, 408]], 6],
  [[[536, 328], [554, 348], [580, 372], [612, 394], [640, 408]], 8],
  [[[510, 344], [526, 360], [548, 374], [574, 388]], 9],
  [[[480, 360], [500, 374], [524, 387], [550, 400]], 8],
  [[[440, 376], [462, 385], [486, 394], [508, 404]], 4],
].map(([p, w]) => streak(p, w));

const BODY = "M640 236C650 232 664 231 676 232C704 235 735 250 760 269C780 284 798 302 810 316C826 336 838 358 848 380C880 379 910 374 940 363C975 348 1003 322 1014 289C1016 283 1023 281 1028 286C1040 297 1051 325 1058 355C1065 390 1069 440 1064 496C1040 478 1012 466 980 461C935 455 880 448 835 448C800 449 775 459 756 472C738 484 726 502 715 526L688 514L640 400z";
const BUMP = "M640 236C650 232 664 231 676 232C704 235 735 250 760 269C780 284 798 302 810 316C826 336 838 358 848 380C825 384 790 388 760 376C720 355 700 322 680 290C670 268 655 248 640 236z";
const OUTLINE = "M640 236C650 232 664 231 676 232C704 235 735 250 760 269C780 284 798 302 810 316C826 336 838 358 848 380M1014 289C1016 283 1023 281 1028 286C1040 297 1051 325 1058 355C1065 390 1069 440 1064 496C1040 478 1012 466 980 461C935 455 880 448 835 448C800 449 775 459 756 472C738 484 726 502 715 526L688 514";

function Surface() {
  return (
    <svg viewBox="235 108 1045 589" className="h-full w-full" role="img" aria-label="Extended quilt surface" fill="none">
      <defs>
        <linearGradient id="bump" gradientUnits="userSpaceOnUse" x1="700" y1="330" x2="823" y2="270">
          <stop offset="0" stopColor="#5dc3ec" />
          <stop offset=".4" stopColor="#55b6dd" />
          <stop offset=".75" stopColor="#468fae" />
          <stop offset="1" stopColor="#397892" />
        </linearGradient>
        <linearGradient id="body" gradientUnits="userSpaceOnUse" x1="690" y1="500" x2="1070" y2="470">
          <stop offset="0" stopColor="#62ccf4" />
          <stop offset=".35" stopColor="#56b9e0" />
          <stop offset=".7" stopColor="#5ac4ef" />
          <stop offset="1" stopColor="#52afd4" />
        </linearGradient>
        <linearGradient id="dense" gradientUnits="userSpaceOnUse" x1="500" y1="305" x2="555" y2="400">
          <stop offset="0" stopColor="#07961a" stopOpacity=".55" />
          <stop offset=".5" stopColor="#07961a" stopOpacity=".3" />
          <stop offset="1" stopColor="#07961a" stopOpacity="0" />
        </linearGradient>
        <linearGradient id="right" gradientUnits="userSpaceOnUse" x1="560" y1="430" x2="730" y2="430">
          <stop offset="0" stopColor="#07911a" stopOpacity="0" />
          <stop offset=".4" stopColor="#07911a" stopOpacity=".75" />
          <stop offset="1" stopColor="#07911a" />
        </linearGradient>
        <radialGradient id="top" gradientUnits="userSpaceOnUse" cx="632" cy="260" r="75">
          <stop offset="0" stopColor="#07911a" stopOpacity=".75" />
          <stop offset=".5" stopColor="#07911a" stopOpacity=".5" />
          <stop offset="1" stopColor="#07911a" stopOpacity="0" />
        </radialGradient>
        <filter id="soft" x="-100%" y="-60%" width="300%" height="220%"><feGaussianBlur stdDeviation="4" /></filter>
        <filter id="softer" x="-60%" y="-60%" width="220%" height="220%"><feGaussianBlur stdDeviation="14" /></filter>
        <clipPath id="bodyClip"><path d={BODY} /></clipPath>
        <clipPath id="greenClip"><path d={GREEN_AREA} /></clipPath>
      </defs>

      <path d={BODY} fill="url(#body)" />
      <path d={BUMP} fill="url(#bump)" />
      <g clipPath="url(#bodyClip)">
        <path d="M750 378C790 374 820 382 900 378V396H760z" fill="#59bfe8" filter="url(#soft)" />
        <ellipse cx="985" cy="390" rx="68" ry="34" fill="#66dcff" opacity=".6" filter="url(#softer)" transform="rotate(-40 985 390)" />
        <ellipse cx="960" cy="352" rx="60" ry="12" fill="#58b4d8" opacity=".6" filter="url(#soft)" transform="rotate(-32 960 352)" />
        <path d="M1076 380L1080 510L1030 486Q1058 440 1068 380z" fill="#35758f" opacity=".6" filter="url(#softer)" />
        <ellipse cx="1024" cy="342" rx="9" ry="46" fill="#a5edff" opacity=".85" filter="url(#soft)" transform="rotate(23 1024 342)" />
        <ellipse cx="1024" cy="345" rx="4" ry="27" fill="#fff" filter="url(#soft)" transform="rotate(23 1024 345)" />
      </g>
      <path d={OUTLINE} stroke="#3a5562" strokeWidth=".8" />

      <path d={GREEN_AREA} fill="#5cc2ec" />
      <g clipPath="url(#greenClip)">
        <path d={GREEN_AREA} fill="url(#dense)" />
        <path d={GREEN_AREA} fill="url(#top)" />
        {ROWS.map((d, i) => <path key={i} d={d} stroke="#07911a" strokeWidth="1" strokeDasharray={i % 2 ? "3 .8" : "2.400 .6"} opacity=".8" />)}
        {ROWS.map((d, i) => <path key={i} d={d} stroke="url(#right)" strokeWidth={i < 16 ? "2.400" : "1.900"} strokeDasharray={i < 16 ? "2.200 1.600" : "20 .4"} />)}
        {COLS.map((d, i) => <path key={i} d={d} stroke="#07961a" strokeWidth="1.300" opacity={Math.min(1, 1.25 - (1.25 * i) / COL_COUNT)} />)}
        {TIP_COLS.map((d, i) => <path key={i} d={d} stroke="#07911a" strokeWidth="1" opacity={0.6 - i / 22} />)}
        {STREAKS.map((d, i) => <path key={i} d={d} fill="#07911a" opacity={i > 3 ? 0.8 : 0.95} />)}
      </g>
      <path d={toPath(EDGE_L)} stroke="#0b9a1a" strokeWidth="1.200" />
      <path d={toPath(EDGE_T)} stroke="#35b46a" strokeWidth="1.200" />
      <path d={toPath(EDGE_R)} stroke="#48c08a" strokeWidth="1" />
      <path d={toPath(EDGE_B)} stroke="#5cc2ec" strokeWidth="1.400" />
      <path d={toPath(EDGE_B)} stroke="#16a02a" strokeWidth="1.400" strokeDasharray="9 3 5 4" />

      <path d="M776 146.500V157.500L778.600 155.200L780.400 159L782.200 158.200L780.500 154.500H783.500z" fill="#fff" stroke="#3a3f42" strokeWidth=".8" />
    </svg>
  );
}

const VIEW_TOOLS = ["zoomin", "zoomout", "refit", "render", "boxwire", "saved", "section", "camlist", "persp", "datumdisp", "datums", "annot", "spin", "sim", "pause", "stop"];

function Viewport() {
  return (
    <main className="relative min-w-0 flex-1 overflow-hidden bg-[#e7ebee]">
      <Surface />
      <div className="absolute inset-x-0 top-[5px] flex justify-center">
        <div className="flex h-[21px] w-[281px] items-center justify-between border border-[#b8bfc2] bg-[#f9fbfb] px-px">
          {VIEW_TOOLS.map((n) => (
            <IconButton key={n} name={n} className={n === "annot" ? "w-4 border border-[#b0b6b9] bg-[#dcdfe0]" : "w-4"} />
          ))}
        </div>
      </div>
    </main>
  );
}

/* ---------- status bar ---------- */
function StatusBar() {
  return (
    <footer className="flex h-[23px] shrink-0 items-center border-t border-[#c1c7c8] bg-[#f6faf9] pl-1 pr-3">
      <IconButton name="modeltree" label="Toggle tree" className="w-[15px] border border-[#b4babc] bg-[#dde1e2]" />
      <IconButton name="web" label="Toggle browser" className="w-5" />
      <IconButton name="blank" label="Full screen" className="w-[15px]" />
      <div className="ml-[5px] h-4 w-px bg-[#c9cfd0]" />
      <div className="flex-1" />
      <div className="h-4 w-1 border-x border-[#c9cfd0]" />
      <IconButton name="binoc" label="Find" className="w-[18px]" />
      <CaretButton label="Find options" className="w-[6px]" />
      <div className="ml-1 h-4 w-px bg-[#c9cfd0]" />
      <IconButton name="dashed" label="Selection box" className="w-[18px]" />
      <CaretButton label="Selection options" className="w-[6px]" />
      <IconButton name="picker" label="Selection" className="w-[22px]" />
      <span className="w-[57px] whitespace-nowrap">1 selected</span>
      <div className="relative flex">
        <select aria-label="Selection filter" className="h-[15px] w-[110px] appearance-none border border-[#b8bec0] bg-white pl-1 text-[8px] leading-none text-[#454b4f] outline-none">
          <option>Geometry</option>
        </select>
        <span className="pointer-events-none absolute inset-y-0 right-0 flex w-[11px] items-center justify-center border-l border-[#c9cfd0]"><Caret /></span>
      </div>
    </footer>
  );
}

export default function App() {
  return (
    <div className="flex h-screen flex-col overflow-hidden font-[Lato,'Open_Sans',sans-serif] text-[8px] leading-none text-[#4c5256]">
      <TitleBar />
      <TabBar />
      <Ribbon />
      <div className="flex min-h-0 flex-1">
        <SideBar />
        <Viewport />
      </div>
      <StatusBar />
    </div>
  );
}
